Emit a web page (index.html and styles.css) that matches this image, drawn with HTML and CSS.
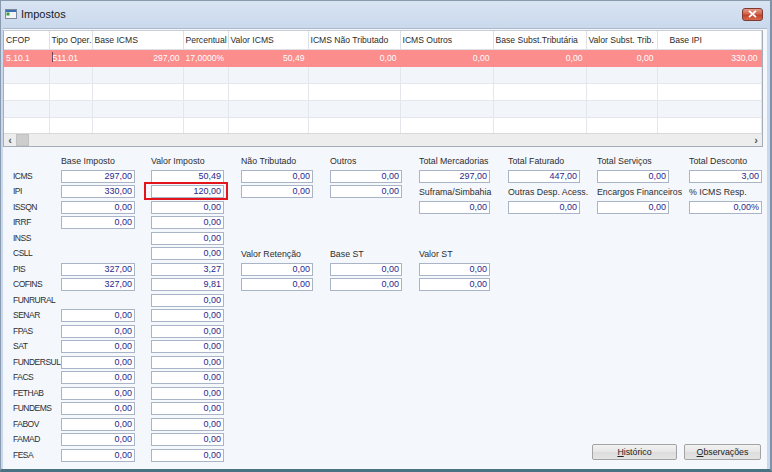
FILE: index.html
```html
<!DOCTYPE html>
<html lang="pt-BR">
<head>
<meta charset="utf-8">
<title>Impostos</title>
<link rel="stylesheet" href="styles.css">
</head>
<body>
<div class="window">
  <div class="titlebar">
    <span class="app-icon">
      <svg width="12" height="10" viewBox="0 0 12 10"><rect x="0.5" y="0.5" width="11" height="9" fill="#f4f4f4" stroke="#7a8a9c"/><rect x="1" y="1" width="10" height="2" fill="#3d6fb4"/><rect x="1.5" y="3.5" width="3" height="3" fill="#3aa040"/></svg>
    </span>
    <span class="title">Impostos</span>
    <span class="close"><svg width="9" height="8" viewBox="0 0 9 8"><path d="M1 0.8 L8 7.2 M8 0.8 L1 7.2" stroke="#fff" stroke-width="1.8"/></svg></span>
  </div>
  <div class="client">
    <div class="datagrid">
      <div class="gridview">
        <table class="tbl">
          <colgroup>
            <col class="w45"><col class="w43"><col class="w91"><col class="w45"><col class="w80"><col class="w92"><col class="w93"><col class="w93"><col class="w71"><col class="w104">
          </colgroup>
          <thead>
            <tr><th>CFOP</th><th>Tipo Oper.</th><th>Base ICMS</th><th>Percentual</th><th>Valor ICMS</th><th>ICMS Não Tributado</th><th>ICMS Outros</th><th>Base Subst.Tributária</th><th>Valor Subst. Trib.</th><th class="pad">Base IPI</th></tr>
          </thead>
          <tbody>
            <tr class="sel"><td>5.10.1</td><td><span class="caret"></span>511.01</td><td class="num">297,00</td><td>17,0000%</td><td class="num">50,49</td><td class="num">0,00</td><td class="num">0,00</td><td class="num">0,00</td><td class="num">0,00</td><td class="num">330,00</td></tr>
            <tr class="alt"><td></td><td></td><td></td><td></td><td></td><td></td><td></td><td></td><td></td><td></td></tr>
            <tr><td></td><td></td><td></td><td></td><td></td><td></td><td></td><td></td><td></td><td></td></tr>
            <tr class="alt"><td></td><td></td><td></td><td></td><td></td><td></td><td></td><td></td><td></td><td></td></tr>
            <tr><td></td><td></td><td></td><td></td><td></td><td></td><td></td><td></td><td></td><td></td></tr>
          </tbody>
        </table>
      </div>
      <div class="hscroll">
        <span class="arrow">&lsaquo;</span>
        <span class="thumb"></span>
        <span class="track"></span>
        <span class="arrow">&rsaquo;</span>
      </div>
    </div>

    <div class="form">
      <div class="hdr c2">Base Imposto</div><div class="hdr c4">Valor Imposto</div><div class="hdr c6">Não Tributado</div><div class="hdr c8">Outros</div><div class="hdr c10">Total Mercadorias</div><div class="hdr c12">Total Faturado</div><div class="hdr c14">Total Serviços</div><div class="hdr c16">Total Desconto</div>

      <div class="lbl c1">ICMS</div><div class="fld c2">297,00</div><div class="fld c4">50,49</div><div class="fld c6">0,00</div><div class="fld c8">0,00</div><div class="fld c10">297,00</div><div class="fld c12">447,00</div><div class="fld c14">0,00</div><div class="fld c16">3,00</div>

      <div class="lbl c1">IPI</div><div class="fld c2">330,00</div><div class="fld c4 hl">120,00</div><div class="fld c6">0,00</div><div class="fld c8">0,00</div><div class="hdr c10">Suframa/Simbahia</div><div class="hdr c12">Outras Desp. Acess.</div><div class="hdr c14">Encargos Financeiros</div><div class="hdr c16">% ICMS Resp.</div>

      <div class="lbl c1">ISSQN</div><div class="fld c2">0,00</div><div class="fld c4">0,00</div><div class="fld c10">0,00</div><div class="fld c12">0,00</div><div class="fld c14">0,00</div><div class="fld c16">0,00%</div>

      <div class="lbl c1">IRRF</div><div class="fld c2">0,00</div><div class="fld c4">0,00</div>

      <div class="lbl c1">INSS</div><div class="fld c4">0,00</div>

      <div class="lbl c1">CSLL</div><div class="fld c4">0,00</div><div class="hdr c6">Valor Retenção</div><div class="hdr c8">Base ST</div><div class="hdr c10">Valor ST</div>

      <div class="lbl c1">PIS</div><div class="fld c2">327,00</div><div class="fld c4">3,27</div><div class="fld c6">0,00</div><div class="fld c8">0,00</div><div class="fld c10">0,00</div>

      <div class="lbl c1">COFINS</div><div class="fld c2">327,00</div><div class="fld c4">9,81</div><div class="fld c6">0,00</div><div class="fld c8">0,00</div><div class="fld c10">0,00</div>

      <div class="lbl c1">FUNRURAL</div><div class="fld c4">0,00</div>

      <div class="lbl c1">SENAR</div><div class="fld c2">0,00</div><div class="fld c4">0,00</div>
      <div class="lbl c1">FPAS</div><div class="fld c2">0,00</div><div class="fld c4">0,00</div>
      <div class="lbl c1">SAT</div><div class="fld c2">0,00</div><div class="fld c4">0,00</div>
      <div class="lbl c1">FUNDERSUL</div><div class="fld c2">0,00</div><div class="fld c4">0,00</div>
      <div class="lbl c1">FACS</div><div class="fld c2">0,00</div><div class="fld c4">0,00</div>
      <div class="lbl c1">FETHAB</div><div class="fld c2">0,00</div><div class="fld c4">0,00</div>
      <div class="lbl c1">FUNDEMS</div><div class="fld c2">0,00</div><div class="fld c4">0,00</div>
      <div class="lbl c1">FABOV</div><div class="fld c2">0,00</div><div class="fld c4">0,00</div>
      <div class="lbl c1">FAMAD</div><div class="fld c2">0,00</div><div class="fld c4">0,00</div>
      <div class="lbl c1">FESA</div><div class="fld c2">0,00</div><div class="fld c4">0,00</div>

      <div class="buttons">
        <button class="btn"><u>H</u>istórico</button>
        <button class="btn"><u>O</u>bservações</button>
      </div>
    </div>
  </div>
</div>
</body>
</html>
```

FILE: styles.css
```css
* { box-sizing: border-box; }
html, body { margin: 0; padding: 0; }
body {
  width: 772px;
  height: 472px;
  overflow: hidden;
  background: #ffffff;
  font-family: "Liberation Sans", Arial, sans-serif;
}
.window {
  width: 772px;
  height: 472px;
  display: flex;
  flex-direction: column;
  background: linear-gradient(to bottom, #d9e4f3 0px, #c9d8ec 28px, #c9d8ec 100%);
  border: 1px solid #8a9bb0;
  border-bottom: 3px solid #4a7282;
  border-right: 2px solid #7f93a8;
}
.titlebar {
  height: 27px;
  flex: none;
  display: flex;
  align-items: center;
  padding: 0 7px 1px 4px;
}
.app-icon { width: 12px; height: 10px; display: flex; margin-right: 4px; }
.title {
  font-size: 11px;
  color: #1a1a1a;
  flex: 1;
}
.close {
  width: 21px;
  height: 13px;
  margin-top: 0;
  border-radius: 3px;
  border: 1px solid #7e3a2e;
  background: linear-gradient(to bottom, #e49a86 0%, #d2644c 45%, #c1402a 55%, #d46a4f 100%);
  display: flex;
  align-items: center;
  justify-content: center;
}
.client {
  flex: 1;
  margin: 0 3px 0 2px;
  background: #f4f7fc;
  border-top: 1px solid #aab8c9;
  display: flex;
  flex-direction: column;
}
.datagrid {
  margin: 1px 4px 0 0;
  height: 117px;
  border: 1px solid #a4adb8;
  border-top: 1px solid #c8ced6;
  display: flex;
  flex-direction: column;
  background: #ffffff;
}
.gridview {
  flex: 1;
  overflow: hidden;
}
.tbl {
  border-collapse: collapse;
  table-layout: fixed;
  width: 757px;
  font-size: 8.6px;
}
.w45 { width: 45px; } .w43 { width: 43px; } .w91 { width: 91px; } .w80 { width: 80px; }
.w92 { width: 92px; } .w93 { width: 93px; } .w71 { width: 71px; } .w104 { width: 104px; }
.tbl th {
  height: 18px;
  font-weight: normal;
  text-align: left;
  color: #2b2b2b;
  padding: 0 0 0 2px;
  border-right: 1px solid #dde1e6;
  border-bottom: 1px solid #dde1e6;
  white-space: nowrap;
  overflow: hidden;
}
.tbl th.pad { padding-left: 12px; }
.tbl td {
  height: 17px;
  padding: 0 3px 0 2px;
  border-right: 1px solid #e3e6ea;
  border-bottom: 1px solid #e3e6ea;
  white-space: nowrap;
  overflow: hidden;
}
.tbl td.num { text-align: right; }
.tbl tr.alt td { background: #f2f5fa; }
.tbl tr.sel td {
  background: #fb8d8d;
  color: #ffffff;
  border-color: #fb8d8d;
}
.caret {
  display: inline-block;
  width: 1px;
  height: 10px;
  background: #6a4040;
  vertical-align: -1px;
}
.hscroll {
  height: 13px;
  flex: none;
  display: flex;
  align-items: center;
  background: #ededed;
  border-top: 1px solid #d9d9d9;
}
.hscroll .arrow {
  width: 12px;
  text-align: center;
  font-size: 11px;
  font-weight: bold;
  color: #555;
  line-height: 12px;
}
.hscroll .thumb {
  width: 13px;
  height: 12px;
  background: #cdcdcd;
  border: 1px solid #c2c2c2;
}
.hscroll .track { flex: 1; }

.form {
  flex: 1;
  display: grid;
  grid-template-columns: 48px 74px 16px 73px 17px 72px 17px 72px 17px 71px 18px 72px 17px 72px 20px 73px;
  grid-template-rows: repeat(20, 15.5px);
  align-items: start;
  padding: 7px 0 0 10px;
  font-size: 8.8px;
  color: #2e2e2e;
}
.c1 { grid-column: 1; }
.c2 { grid-column: 2; }
.c4 { grid-column: 4; }
.c6 { grid-column: 6; }
.c8 { grid-column: 8; }
.c10 { grid-column: 10; }
.c12 { grid-column: 12; }
.c14 { grid-column: 14; }
.c16 { grid-column: 16; }
.hdr, .lbl {
  line-height: 13px;
  white-space: nowrap;
}
.hdr { padding-top: 1px; }
.lbl {
  padding-left: 0;
  font-size: 8.5px;
  letter-spacing: -0.5px;
}
.fld {
  height: 13px;
  background: #ffffff;
  border: 1px solid #a9b5c6;
  text-align: right;
  padding-right: 2px;
  line-height: 11px;
  color: #28288c;
  font-size: 9px;
}
.hl { position: relative; }
.hl::after {
  content: "";
  position: absolute;
  left: -8px;
  right: -5px;
  top: -4px;
  bottom: -3px;
  border: 2px solid #e3141c;
}
.buttons {
  grid-column: 12 / 17;
  grid-row: 19 / 21;
  align-self: stretch;
  display: flex;
  justify-content: flex-end;
  align-items: flex-end;
  gap: 7px;
  padding: 0 1px 4px 0;
}
.btn {
  width: 85px;
  height: 16px;
  padding: 0;
  font-family: "Liberation Sans", Arial, sans-serif;
  font-size: 8.8px;
  color: #222;
  background: linear-gradient(to bottom, #f2f2f2, #e6e6e6 50%, #dcdcdc 51%, #e4e4e4);
  border: 1px solid #a3a3a3;
  border-radius: 2px;
}
.btn + .btn { width: 77px; }
```
